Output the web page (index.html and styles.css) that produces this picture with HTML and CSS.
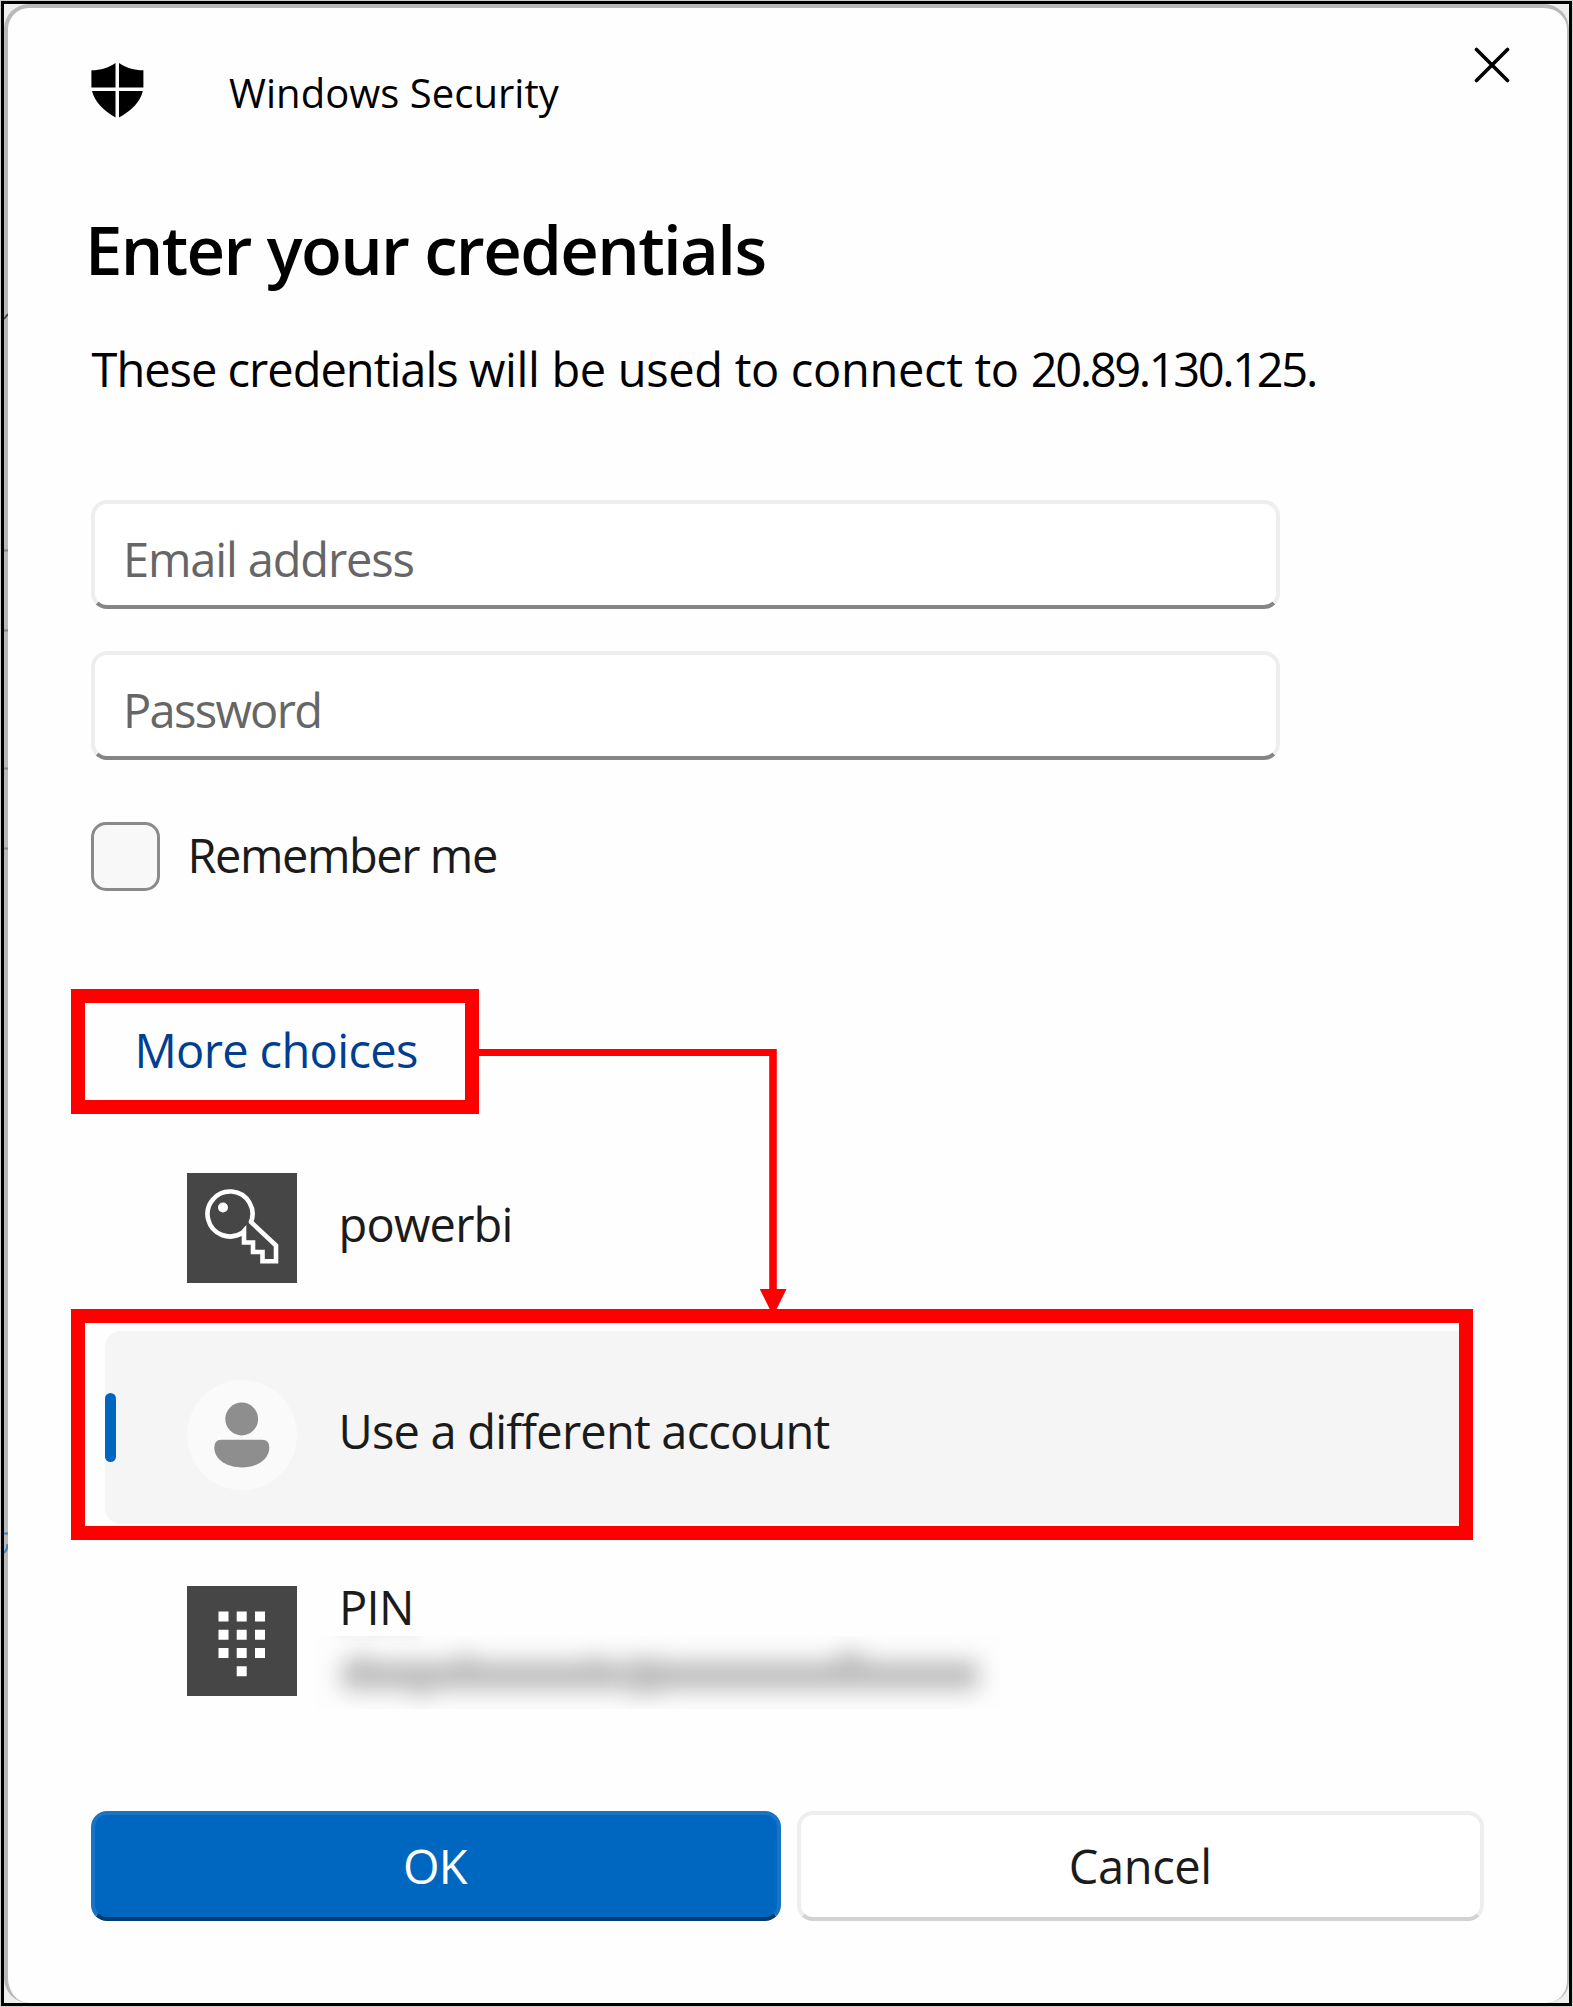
FILE: index.html
```
<!DOCTYPE html>
<html lang="en">
<head>
<meta charset="utf-8">
<title>Windows Security</title>
<link rel="stylesheet" href="styles.css">
</head>
<body>
<div class="frame">
  <main class="dialog">
    <header class="header">
      <svg class="shield" width="53" height="55" viewBox="0 0 53 55">
        <path d="M24.500 0V24.400H.4V7.300C10 7.300 17 4.800 24.500 0Z"/>
        <path d="M28 0C35.500 4.800 43 7.300 52.400 7.300V24.400H28Z"/>
        <path d="M1 28H24.500V54.500C12 47.500 3.500 38 1 28Z"/>
        <path d="M28 28H51.800C49.500 38 41 47.500 28 54.500Z"/>
      </svg>
      <span class="app-name">Windows Security</span>
      <svg class="close" width="36" height="36" viewBox="0 0 36 36">
        <path d="M2.500 2.500L33.500 33.500M33.500 2.500L2.500 33.500"/>
      </svg>
    </header>

    <h1 class="heading">Enter your credentials</h1>
    <p class="message">These credentials <span class="purpose">will be used to connect to </span><span class="host">20.89.130.125.</span></p>

    <div class="fields">
      <div class="field email">Email address</div>
      <div class="field password">Password</div>
    </div>

    <div class="remember">
      <span class="checkbox"></span>
      <span class="remember-label">Remember me</span>
    </div>

    <div class="more callout"><a class="more-link">More choices</a></div>

    <div class="choice powerbi">
      <svg class="tile" width="110" height="110" viewBox="0 0 110 110">
        <rect class="tile-bg" width="110" height="110"/>
        <path class="key" d="M63.500 50.300A22.500 22.500 0 1 0 55.500 59.700L57 58V69.500H66V79H75.500V88.300H89V72.500L63.500 48.500"/>
        <circle class="light" cx="36" cy="34.500" r="5"/>
      </svg>
      <span class="choice-name">powerbi</span>
    </div>

    <div class="selected callout">
      <div class="choice selected-item">
        <span class="indicator"></span>
        <svg class="tile" width="110" height="110" viewBox="0 0 110 110">
          <circle class="avatar-bg" cx="55" cy="55" r="55"/>
          <circle class="person" cx="54.700" cy="39" r="16.400"/>
          <path class="person" d="M34.300 59.700H75.300Q82.300 59.700 82.300 67.500C82.300 80 69 87.400 54.800 87.400S27.300 80 27.300 67.500Q27.300 59.700 34.300 59.700Z"/>
        </svg>
        <span class="choice-name different">Use a different account</span>
      </div>
    </div>

    <div class="choice pin">
      <svg class="tile" width="110" height="110" viewBox="0 0 110 110">
        <rect class="tile-bg" width="110" height="110"/>
        <path class="light" d="M31.500 25.500h10v10h-10zM49.700 25.500h10v10h-10zM68 25.500h10v10h-10zM31.500 43.800h10v10h-10zM49.700 43.800h10v10h-10zM68 43.800h10v10h-10zM31.500 62h10v10h-10zM49.700 62h10v10h-10zM68 62h10v10h-10zM49.700 80.300h10v10h-10z"/>
      </svg>
      <div class="pin-text">
        <span class="pin-name">PIN</span>
        <svg class="redacted" width="684" height="73" viewBox="0 0 684 73">
          <g class="smudge">
            <path d="M26 25H308V54H26ZM36 20H54V30H36ZM142 18H158V30H142ZM272 20H286V30H272ZM96 48H114V60H96Z"/>
            <path d="M310 22H346V58H310ZM346 25H662V54H346ZM520 16H548V30H520Z"/>
          </g>
          <rect class="haze" x="20" y="-12" width="84" height="9"/>
        </svg>
      </div>
    </div>

    <div class="actions">
      <div class="button primary">OK</div>
      <div class="button secondary">Cancel</div>
    </div>
  </main>

  <svg class="connector" width="320" height="270" viewBox="0 0 320 270">
    <path d="M0 0H297.800V240H307.500L294.200 267L280.700 240H290.200V7H0Z"/>
  </svg>
  <svg class="edge-marks" width="4" height="1300" viewBox="0 0 4 1300">
    <path class="tick" d="M0 6L4 1"/>
    <path class="rule" d="M0 237.500H4M0 317.500H4M0 455.500H4M0 535.500H4"/>
    <path class="blue" d="M0 1220.500H4M0 1240Q3.500 1237 3.500 1231"/>
  </svg>
</div>
</body>
</html>
```
FILE: styles.css
```
* { box-sizing: border-box; }

body {
  margin: 0;
  padding: 1px;
  width: 1573px;
  height: 2007px;
  overflow: hidden;
  background: #cdd0cd;
  color: #1b1b1b;
  font: 47px/66px "Open Sans", "Noto Sans", sans-serif;
}

.frame {
  position: relative;
  width: 1571px;
  height: 2005px;
  border: 3px solid #000;
  background: #efefef;
  overflow: hidden;
}

.dialog {
  height: 1999px;
  padding: 39px 84px 0 83px;
  border: solid #b9b9b9;
  border-width: 4px 2px 0 4px;
  border-radius: 25px 25px 22px 25px;
  background: #fefefe;
  white-space: nowrap;
}

.header {
  display: flex;
  align-items: flex-start;
  height: 72px;
  margin-right: -27px;
}

.shield { margin-top: 16px; fill: #000; }

.app-name {
  margin: 18px 0 0 85px;
  color: #000;
  font-size: 40px;
  line-height: 56px;
  letter-spacing: 0.03px;
}

.close {
  margin-left: auto;
  fill: none;
  stroke: #000;
  stroke-width: 3.6px;
  stroke-linecap: round;
}

.heading {
  margin: 85px 0 0 -6px;
  color: #000;
  font-size: 67px;
  font-weight: 600;
  line-height: 90px;
  letter-spacing: -1.62px;
}

.message {
  margin: 42px 0 0 0.5px;
  color: #000;
  letter-spacing: -1px;
}

.purpose { letter-spacing: -0.34px; }
.host { letter-spacing: -2.35px; }

.fields {
  display: flex;
  flex-direction: column;
  gap: 42px;
  margin-top: 98px;
}

.field {
  width: 1189px;
  height: 109px;
  padding: 22px 28px 0;
  border: 4px solid #eee;
  border-bottom-color: #858585;
  border-radius: 16px;
  background: #fff;
  color: #666;
}

.email { letter-spacing: -1.15px; }
.password { letter-spacing: -1.7px; }

.remember {
  display: flex;
  align-items: center;
  height: 69px;
  margin-top: 62px;
}

.checkbox {
  width: 69px;
  height: 69px;
  border: 3px solid #8a8a8a;
  border-radius: 15px;
  background: #f8f8f8;
}

.remember-label {
  margin-left: 27.500px;
  padding-bottom: 4px;
  letter-spacing: -1.45px;
}

.callout { border: 14px solid #f00; }

.more {
  width: 408px;
  height: 125px;
  margin: 98px 0 0 -20px;
  padding: 14px 0 0 49.500px;
}

.more-link { color: #003e92; letter-spacing: -0.66px; }

.choice { display: flex; align-items: center; }
.tile { flex: none; }
.tile-bg { fill: #464646; }
.light { fill: #fff; }
.key { fill: none; stroke: #fff; stroke-width: 4.600px; }
.avatar-bg { fill: #fafafa; }
.person { fill: #8e8e8e; }

.choice-name {
  margin-left: 41.500px;
  padding-bottom: 8px;
  letter-spacing: -0.8px;
}

.powerbi { margin: 59px 0 0 96px; height: 110px; }

.selected {
  width: 1402px;
  height: 231px;
  margin: 26px 0 0 -20px;
  padding: 8px 0 3px 20px;
}

.selected-item {
  height: 193px;
  border-radius: 16px 0 0 16px;
  background: #f5f5f5;
}

.indicator {
  width: 11px;
  height: 69px;
  margin-right: 71px;
  border-radius: 6px;
  background: #0067c0;
}

.selected-item .tile { margin-top: 14px; }
.different { margin-top: 6px; padding-bottom: 0; }

.pin {
  align-items: flex-start;
  height: 124px;
  margin: 46px 0 0 96px;
}

.pin-text {
  display: flex;
  flex-direction: column;
  margin-left: 19px;
}

.pin-name {
  height: 50px;
  margin: -12px 0 12px 23px;
  letter-spacing: -0.7px;
}

.redacted { display: block; overflow: hidden; background: #fdfdfd; }
.smudge { fill: #bdbdbd; filter: blur(11px); }
.haze { fill: #ddd; filter: blur(7px); }

.actions {
  display: flex;
  gap: 16px;
  width: 1393px;
  margin-top: 101px;
}

.button {
  flex: 1;
  height: 110px;
  padding-top: 18px;
  border: 4px solid;
  border-radius: 16px;
  text-align: center;
}

.primary {
  padding-right: 2px;
  border-color: #1a73c4 #1a73c4 #003b73;
  background: #0067c0;
  color: #fff;
  letter-spacing: -1px;
}

.secondary {
  border-color: #eee #eee #d2d2d2;
  background: #fff;
  letter-spacing: -0.4px;
}

/* Annotation arrow and desktop traces overlay the dialog */
.connector {
  position: absolute;
  left: 475px;
  top: 1045px;
  fill: #f00;
}

.edge-marks {
  position: absolute;
  left: 0;
  top: 309px;
  fill: none;
  stroke-width: 2px;
}

.tick { stroke: #444; }
.rule { stroke: #858585; }
.blue { stroke: #3c82bd; }
```
